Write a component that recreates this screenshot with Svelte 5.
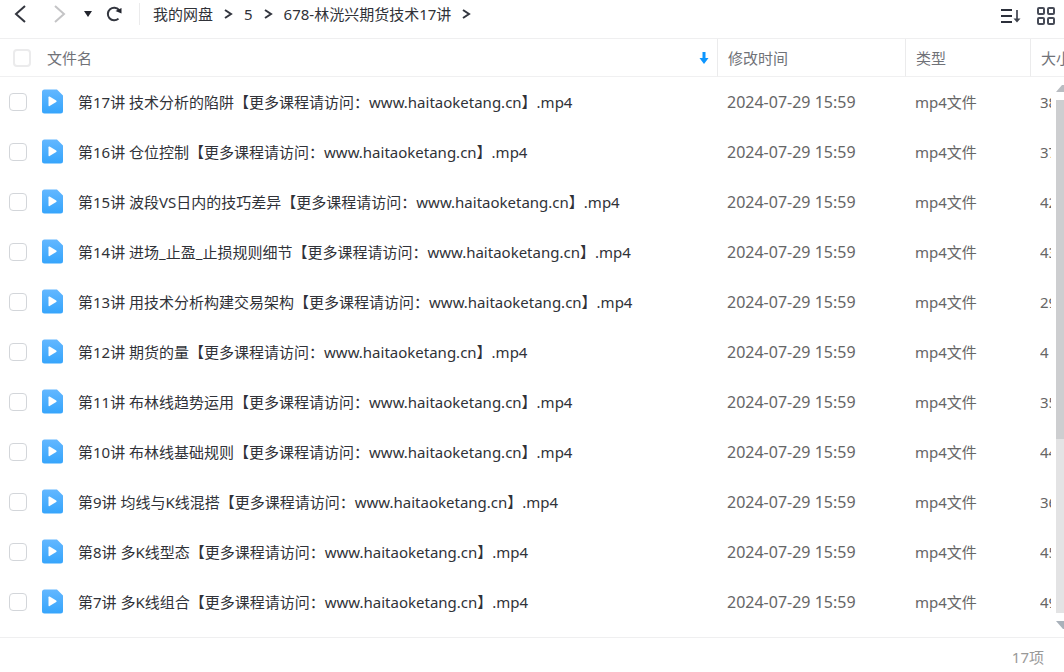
<script>
  const suffix = '【更多课程请访问：www.haitaoketang.cn】.mp4';
  const files = [
    { title: '第17讲 技术分析的陷阱', size: '38' },
    { title: '第16讲 仓位控制', size: '37' },
    { title: '第15讲 波段VS日内的技巧差异', size: '42' },
    { title: '第14讲 进场_止盈_止损规则细节', size: '43' },
    { title: '第13讲 用技术分析构建交易架构', size: '29' },
    { title: '第12讲 期货的量', size: '4' },
    { title: '第11讲 布林线趋势运用', size: '35' },
    { title: '第10讲 布林线基础规则', size: '44' },
    { title: '第9讲 均线与K线混搭', size: '36' },
    { title: '第8讲 多K线型态', size: '45' },
    { title: '第7讲 多K线组合', size: '49' }
  ];
  const crumbs = ['我的网盘', '5', '678-林洸兴期货技术17讲'];
</script>

<div class="page">
  <header class="toolbar">
    <button class="back" aria-label="后退">
      <svg width="14" height="20" viewBox="0 0 14 20"><path d="M12 2 3 10l9 8" fill="none" stroke="#33363f" stroke-width="2" /></svg>
    </button>
    <button class="forward" aria-label="前进">
      <svg width="14" height="20" viewBox="0 0 14 20"><path d="m2 2 9 8-9 8" fill="none" stroke="#c4c4c6" stroke-width="2" /></svg>
    </button>
    <button class="history" aria-label="历史记录">
      <svg width="8" height="8" viewBox="0 0 8 8"><path d="M0 1h8L4 7z" fill="#22252e" /></svg>
    </button>
    <button class="reload" aria-label="刷新">
      <svg width="18" height="16" viewBox="0 0 18 16"><path d="M12.500 12.600A6.300 6.300 0 1 1 13 4" fill="none" stroke="#33363f" stroke-width="2" /><path d="M9.500 5 15.500 2v5.500z" fill="#22252e" /></svg>
    </button>
    <nav class="crumbs" aria-label="路径">
      {#each crumbs as crumb}
        <a href="#top">{crumb}</a>
        <svg width="9" height="10" viewBox="0 0 9 10"><path d="m1 1 6 4-6 4" fill="none" stroke="#33363f" stroke-width="2" /></svg>
      {/each}
    </nav>
    <div class="views">
      <button aria-label="排序">
        <svg width="20" height="16" viewBox="0 0 20 16"><path d="M0 2h11M0 8h11M0 14h11" stroke="#2c303b" stroke-width="2" /><path d="M16 2v10" stroke="#5d606a" stroke-width="2" /><path d="M12.500 10.500h7l-3.500 4z" fill="#3f434d" /></svg>
      </button>
      <button aria-label="网格视图">
        <svg width="18" height="18" viewBox="0 0 18 18"><g fill="none" stroke="#474b57" stroke-width="2"><rect x="1" y="1" width="6" height="6" rx="1" /><rect x="11" y="1" width="6" height="6" rx="1" /><rect x="1" y="11" width="6" height="6" rx="1" /><rect x="11" y="11" width="6" height="6" rx="1" /></g></svg>
      </button>
    </div>
  </header>

  <main class="list">
    <table>
      <colgroup><col /><col class="date" /><col class="type" /><col class="size" /></colgroup>
      <thead>
        <tr>
          <th>
            <div class="namehead">
              <input type="checkbox" aria-label="全选" />
              <span>文件名</span>
              <svg width="10" height="12" viewBox="0 0 10 12"><path d="M3.500 0h3v6H9.500L5 12 .5 6h3z" fill="#0d96ff" /></svg>
            </div>
          </th>
          <th>修改时间</th>
          <th>类型</th>
          <th>大小</th>
        </tr>
      </thead>
      <tbody>
        {#each files as file, i}
          <tr>
            <td>
              <div class="name">
                <input type="checkbox" id="file-{i}" />
                <svg width="22" height="26" viewBox="0 0 22 26">
                  <defs><linearGradient id="blue-{i}" x1="0" y1="0" x2="0" y2="1"><stop offset="0" stop-color="#63b7ff" /><stop offset="1" stop-color="#36a5fc" /></linearGradient></defs>
                  <path d="M2.500 .5h12.500l6 6v15.500a2.500 2.500 0 0 1-2.500 2.500h-16A2.500 2.500 0 0 1 0 22V3A2.500 2.500 0 0 1 2.500 .5z" fill="url(#blue-{i})" />
                  <path d="M6.500 8.300q0-1.300 1.100-.7l6.600 4q1 .7 0 1.400l-6.600 4q-1.100.6-1.100-.7z" fill="#fff" />
                </svg>
                <label for="file-{i}">{file.title}{suffix}</label>
              </div>
            </td>
            <td class="time">2024-07-29 15:59</td>
            <td>mp4文件</td>
            <td><div class="clip">{file.size}</div></td>
          </tr>
        {/each}
      </tbody>
    </table>
    <div class="scroll" aria-hidden="true">
      <svg width="8" height="8" viewBox="0 0 8 8"><path d="M0 8 6 1h2v7z" fill="#b9bcc1" /></svg>
      <div class="track"><div class="thumb"></div></div>
      <svg width="8" height="8" viewBox="0 0 8 8"><path d="M0 0h8v8H7z" fill="#a9b1ba" /></svg>
    </div>
  </main>

  <footer>17项</footer>
</div>

<style>
  :global(body) {
    margin: 0;
    background: #fff;
  }
  .page {
    display: flex;
    flex-direction: column;
    min-height: 100vh;
    overflow: hidden;
    font: 15px/20px "Noto Sans", "Noto Sans CJK SC", sans-serif;
    color: #303238;
  }
  button {
    display: flex;
    padding: 0;
    border: 0;
    background: none;
  }
  svg {
    display: block;
    flex: none;
  }
  .toolbar {
    display: flex;
    align-items: center;
    box-sizing: border-box;
    height: 39px;
    padding: 0 9px 10px 13px;
    border-bottom: 1px solid #efeff0;
  }
  .forward {
    margin-left: 26px;
  }
  .history {
    margin-left: 17px;
  }
  .reload {
    margin-left: 14px;
  }
  .crumbs {
    display: flex;
    align-items: center;
    gap: 11px;
    height: 22px;
    margin-left: 15px;
    padding-left: 13px;
    border-left: 1px solid #ebebec;
  }
  .crumbs a {
    color: inherit;
    text-decoration: none;
  }
  .views {
    display: flex;
    align-items: center;
    gap: 16px;
    margin-left: auto;
    padding-top: 4px;
  }
  .list {
    position: relative;
    flex: 1;
  }
  table {
    width: 100%;
    table-layout: fixed;
    border-collapse: separate;
    border-spacing: 0;
  }
  .date {
    width: 188px;
  }
  .type {
    width: 125px;
  }
  .size {
    width: 34px;
  }
  th,
  td {
    box-sizing: border-box;
    padding: 0 0 0 10px;
    overflow: hidden;
    text-align: left;
    font-weight: 400;
    white-space: nowrap;
    color: #666;
  }
  th {
    height: 38px;
    border-bottom: 1px solid #f0f0f1;
    border-left: 1px solid #ebebec;
    color: #707278;
  }
  td {
    height: 50px;
  }
  .time {
    font-size: 16px;
  }
  th:first-child,
  td:first-child {
    padding-left: 0;
    border-left: 0;
  }
  .namehead,
  .name {
    display: flex;
    align-items: center;
  }
  .namehead {
    gap: 16px;
    padding: 0 8px 0 13px;
  }
  .namehead svg {
    margin-left: auto;
  }
  .name {
    gap: 14px;
    padding-left: 9px;
  }
  .name svg {
    margin-left: 1px;
  }
  label {
    color: #303238;
  }
  input {
    appearance: none;
    flex: none;
    box-sizing: border-box;
    width: 18px;
    height: 18px;
    margin: 0;
    border: 1px solid #d3d6da;
    border-radius: 4px;
    background: #fff;
  }
  .namehead input {
    border: 2px solid #ebebec;
  }
  .clip {
    margin-right: 13px;
    overflow: hidden;
  }
  .scroll {
    position: absolute;
    top: 45px;
    right: 0;
    bottom: 8px;
    display: flex;
    flex-direction: column;
    gap: 8px;
    width: 8px;
  }
  .track {
    flex: 1;
    background: #e3e3e4;
  }
  .thumb {
    height: 66%;
    background: #cdced0;
  }
  footer {
    box-sizing: border-box;
    height: 35px;
    padding: 9px 20px 0 0;
    border-top: 1px solid #efeff0;
    text-align: right;
    color: #999;
  }
</style>
